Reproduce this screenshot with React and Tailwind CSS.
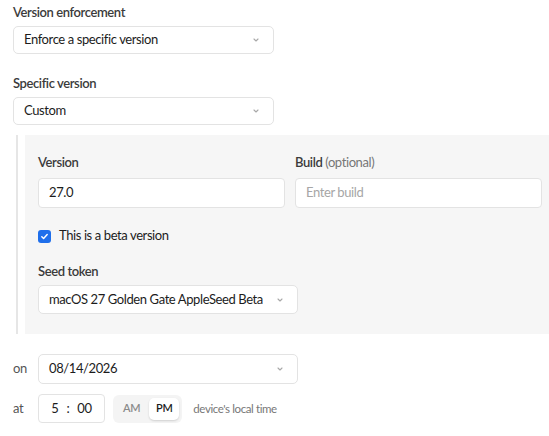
import React, { useState } from 'react'

const Chevron = () => (
    <svg width="10" height="10" viewBox="0 0 10 10" fill="none" className="shrink-0">
        <path d="M3 4l2 2 2-2" stroke="#a8a8a8" strokeWidth="1.1" strokeLinecap="round" strokeLinejoin="round" />
    </svg>
)

const Label = ({ children, className = '' }) => (
    <div className={`text-[13px] leading-[18px] font-semibold text-[#3b3b3b] ${className}`}>{children}</div>
)

const SelectBox = ({ value, className = '' }) => (
    <div className={`flex items-center justify-between h-[28px] rounded-[5px] border border-[#e3e3e3] bg-white pl-[10px] pr-[12px] text-[13px] text-[#1c1c1c] whitespace-nowrap ${className}`}>
        <span>{value}</span>
        <Chevron />
    </div>
)

const TextBox = ({ value, placeholder, className = '' }) => (
    <div className={`flex items-center h-[30px] rounded-[4px] border border-[#e3e3e3] bg-white px-[10px] text-[13px] ${className}`}>
        {value ? <span className="text-[#1c1c1c]">{value}</span> : <span className="text-[#a6a6a6]">{placeholder}</span>}
    </div>
)

const App = () => {
    const [beta, setBeta] = useState(true)
    const [meridiem, setMeridiem] = useState('PM')

    return (
        <div className="w-[549px] h-[436px] overflow-hidden bg-white font-['Lato',sans-serif] tracking-[-0.4px]">
            <div className="pl-[13px] pt-[3px]">

                {/* Enforcement mode */}
                <Label>Version enforcement</Label>
                <SelectBox value="Enforce a specific version" className="mt-[5px] w-[261px]" />

                {/* Version pick */}
                <Label className="mt-[20px]">Specific version</Label>
                <SelectBox value="Custom" className="mt-[5px] w-[261px]" />

                {/* Custom version details */}
                <div className="mt-[10px] ml-[3px] border-l-2 border-[#e6e6e6] pl-[7px] w-[560px]">
                    <div className="bg-[#f6f6f6] pl-[13px] pt-[18px] pb-[20px]">
                        <div className="flex gap-[10px]">
                            <div className="w-[247px]">
                                <Label>Version</Label>
                                <TextBox value="27.0" className="mt-[7px]" />
                            </div>
                            <div className="w-[247px]">
                                <Label>
                                    Build <span className="font-normal text-[#777]">(optional)</span>
                                </Label>
                                <TextBox placeholder="Enter build" className="mt-[7px]" />
                            </div>
                        </div>

                        <label className="mt-[19px] flex items-center gap-[8px] h-[18px] text-[13px] text-[#1c1c1c] cursor-pointer">
                            <span
                                onClick={() => setBeta(!beta)}
                                className={`flex items-center justify-center w-[13px] h-[13px] rounded-[3px] ${beta ? 'bg-[#1f6feb]' : 'border border-gray-300 bg-white'}`}
                            >
                                {beta && (
                                    <svg width="9" height="9" viewBox="0 0 10 10" fill="none">
                                        <path d="M2 5.2l2 2 4-4.4" stroke="white" strokeWidth="1.6" strokeLinecap="round" strokeLinejoin="round" />
                                    </svg>
                                )}
                            </span>
                            This is a beta version
                        </label>

                        <Label className="mt-[17px]">Seed token</Label>
                        <SelectBox value="macOS 27 Golden Gate AppleSeed Beta" className="mt-[5px] w-[260px] h-[29px]" />
                    </div>
                </div>

                {/* Schedule */}
                <div className="mt-[20px] flex items-center">
                    <span className="w-[25px] text-[13px] text-[#555]">on</span>
                    <SelectBox value="08/14/2026" className="w-[260px] h-[30px]" />
                </div>

                <div className="mt-[10px] flex items-center">
                    <span className="w-[25px] text-[13px] text-[#555]">at</span>
                    <div className="flex items-center justify-center gap-[8px] w-[67px] h-[29px] rounded-[4px] border border-[#e3e3e3] bg-white text-[13px] text-[#1c1c1c]">
                        <span>5</span>
                        <span>:</span>
                        <span>00</span>
                    </div>
                    <div className="ml-[8px] flex items-center gap-[2px] h-[28px] rounded-[6px] bg-[#f4f4f4] p-[3px]">
                        {['AM', 'PM'].map(m => (
                            <button
                                key={m}
                                onClick={() => setMeridiem(m)}
                                className={`h-[22px] px-[7px] rounded-[5px] text-[11px] font-semibold ${meridiem === m ? 'bg-white text-[#1c1c1c] shadow-[0_1px_2px_rgba(0,0,0,0.15)]' : 'text-[#8a8a8a]'}`}
                            >
                                {m}
                            </button>
                        ))}
                    </div>
                    <span className="ml-[11px] text-[11.5px] text-[#777]">device's local time</span>
                </div>
            </div>
        </div>
    )
}

export default App
